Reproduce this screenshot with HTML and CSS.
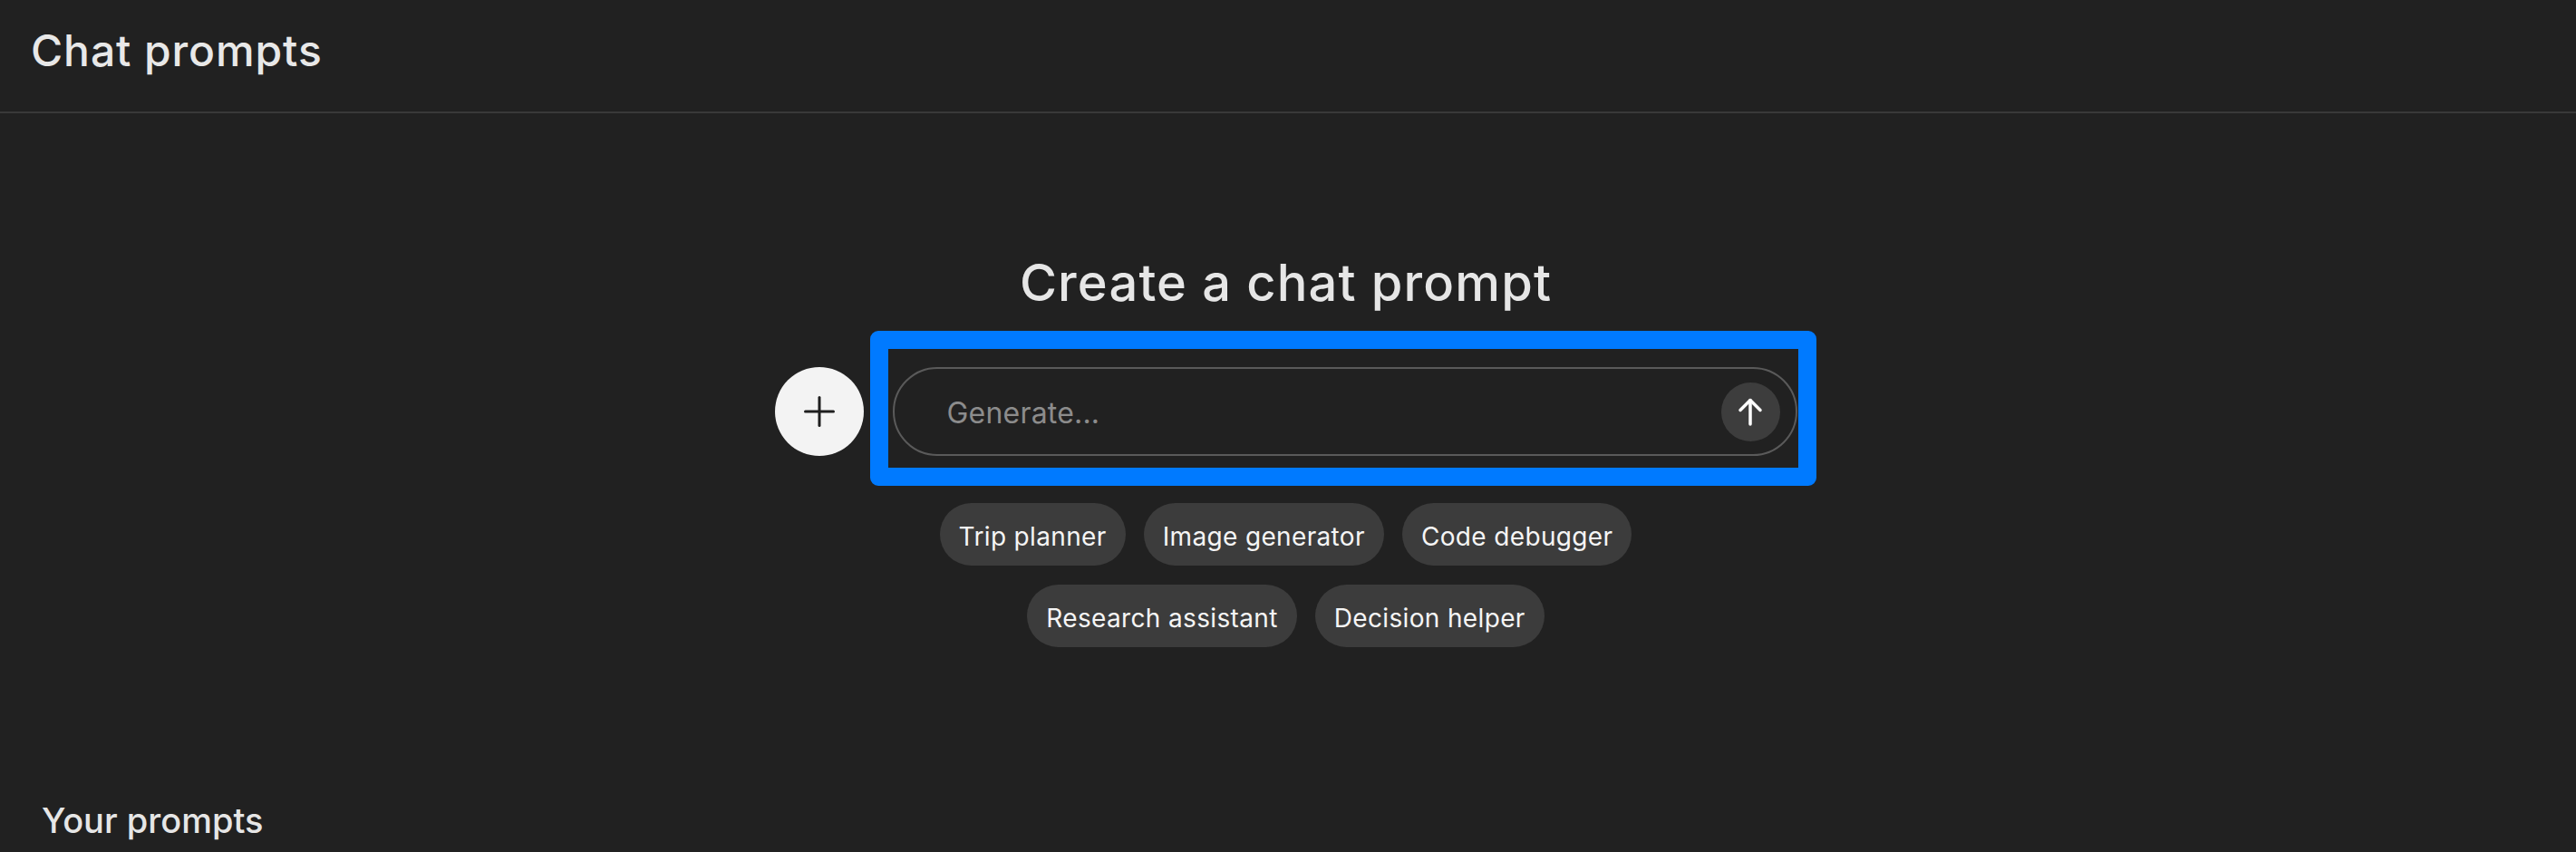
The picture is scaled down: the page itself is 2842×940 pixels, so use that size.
FILE: index.html
```html
<!DOCTYPE html>
<html lang="en">
<head>
<meta charset="utf-8">
<title>Chat prompts</title>
<link rel="stylesheet" href="styles.css">
</head>
<body>
  <header class="topbar">
    <h1 class="page-title">Chat prompts</h1>
  </header>
  <main class="main">
    <section class="create">
      <h2 class="create-title">Create a chat prompt</h2>
      <div class="composer">
        <button class="add-btn" type="button" aria-label="Add">
          <svg width="34" height="34" viewBox="0 0 34 34" fill="none" stroke="#1e1e1e" stroke-width="3" stroke-linecap="round">
            <line x1="1.5" y1="17" x2="32.5" y2="17"/>
            <line x1="17" y1="1.5" x2="17" y2="32.5"/>
          </svg>
        </button>
        <div class="pill highlighted">
          <input class="pill-input" type="text" placeholder="Generate...">
          <button class="send-btn" type="button" aria-label="Send">
            <svg width="32" height="32" viewBox="0 0 32 32" fill="none" stroke="#ffffff" stroke-width="3.5" stroke-linecap="round" stroke-linejoin="round">
              <line x1="16" y1="3.5" x2="16" y2="30"/>
              <polyline points="5,14.5 16,3.5 27,14.5"/>
            </svg>
          </button>
        </div>
      </div>
      <div class="chips">
        <span class="chip">Trip planner</span>
        <span class="chip">Image generator</span>
        <span class="chip">Code debugger</span>
        <span class="chip">Research assistant</span>
        <span class="chip">Decision helper</span>
      </div>
    </section>
    <section class="yours">
      <h2 class="yours-title">Your prompts</h2>
    </section>
  </main>
</body>
</html>
```

FILE: styles.css
```css
* {
  box-sizing: border-box;
}

html, body {
  margin: 0;
  padding: 0;
  background: #212121;
  color: #e6e6e6;
  font-family: Inter, "Noto Sans", "Liberation Sans", sans-serif;
}

body {
  min-height: 940px;
  overflow: hidden;
}

.topbar {
  padding: 27px 34px 38px;
  border-bottom: 2px solid #393939;
}

.page-title {
  margin: 0;
  font-size: 48px;
  line-height: 58px;
  font-weight: 500;
  letter-spacing: 0.9px;
  color: #e8e8e8;
}

.main {
  display: flex;
  flex-direction: column;
}

.create {
  display: flex;
  flex-direction: column;
  align-items: center;
  margin-top: 153px;
  padding-right: 5px;
}

.create-title {
  margin: 0;
  font-size: 56px;
  line-height: 68px;
  font-weight: 500;
  letter-spacing: 1.15px;
  color: #e6e6e6;
}

.composer {
  display: flex;
  align-items: center;
  gap: 32px;
  margin-top: 59px;
}

.add-btn {
  width: 98px;
  height: 98px;
  border-radius: 50%;
  border: none;
  background: #f3f3f3;
  display: flex;
  align-items: center;
  justify-content: center;
  padding: 0;
}

.pill {
  position: relative;
  width: 998px;
  height: 98px;
  border: 2px solid #5a5a5a;
  border-radius: 49px;
  display: flex;
  align-items: center;
  padding: 0 17px 0 58px;
}

.highlighted::after {
  content: "";
  position: absolute;
  top: -42px;
  left: -27px;
  right: -23px;
  bottom: -35px;
  border: 20px solid #007aff;
  border-radius: 9px;
  pointer-events: none;
}

.pill-input {
  flex: 1;
  background: transparent;
  border: none;
  outline: none;
  font-family: inherit;
  font-size: 32px;
  letter-spacing: 0.2px;
  color: #e6e6e6;
  padding: 0;
  margin-top: 3px;
}

.pill-input::placeholder {
  color: #8c8c8c;
}

.send-btn {
  width: 65px;
  height: 65px;
  border-radius: 50%;
  border: none;
  background: #3d3d3d;
  display: flex;
  align-items: center;
  justify-content: center;
  padding: 0;
}

.chips {
  display: flex;
  flex-wrap: wrap;
  justify-content: center;
  gap: 21px 20px;
  width: 820px;
  margin-top: 52px;
}

.chip {
  background: #3c3c3c;
  color: #f5f5f5;
  font-size: 28px;
  line-height: 34px;
  letter-spacing: 0.35px;
  padding: 20px 21px 15px;
  border-radius: 35px;
  white-space: nowrap;
}

.yours {
  padding: 168px 46px 0;
}

.yours-title {
  margin: 0;
  font-size: 38px;
  line-height: 46px;
  font-weight: 500;
  color: #e6e6e6;
}
```
